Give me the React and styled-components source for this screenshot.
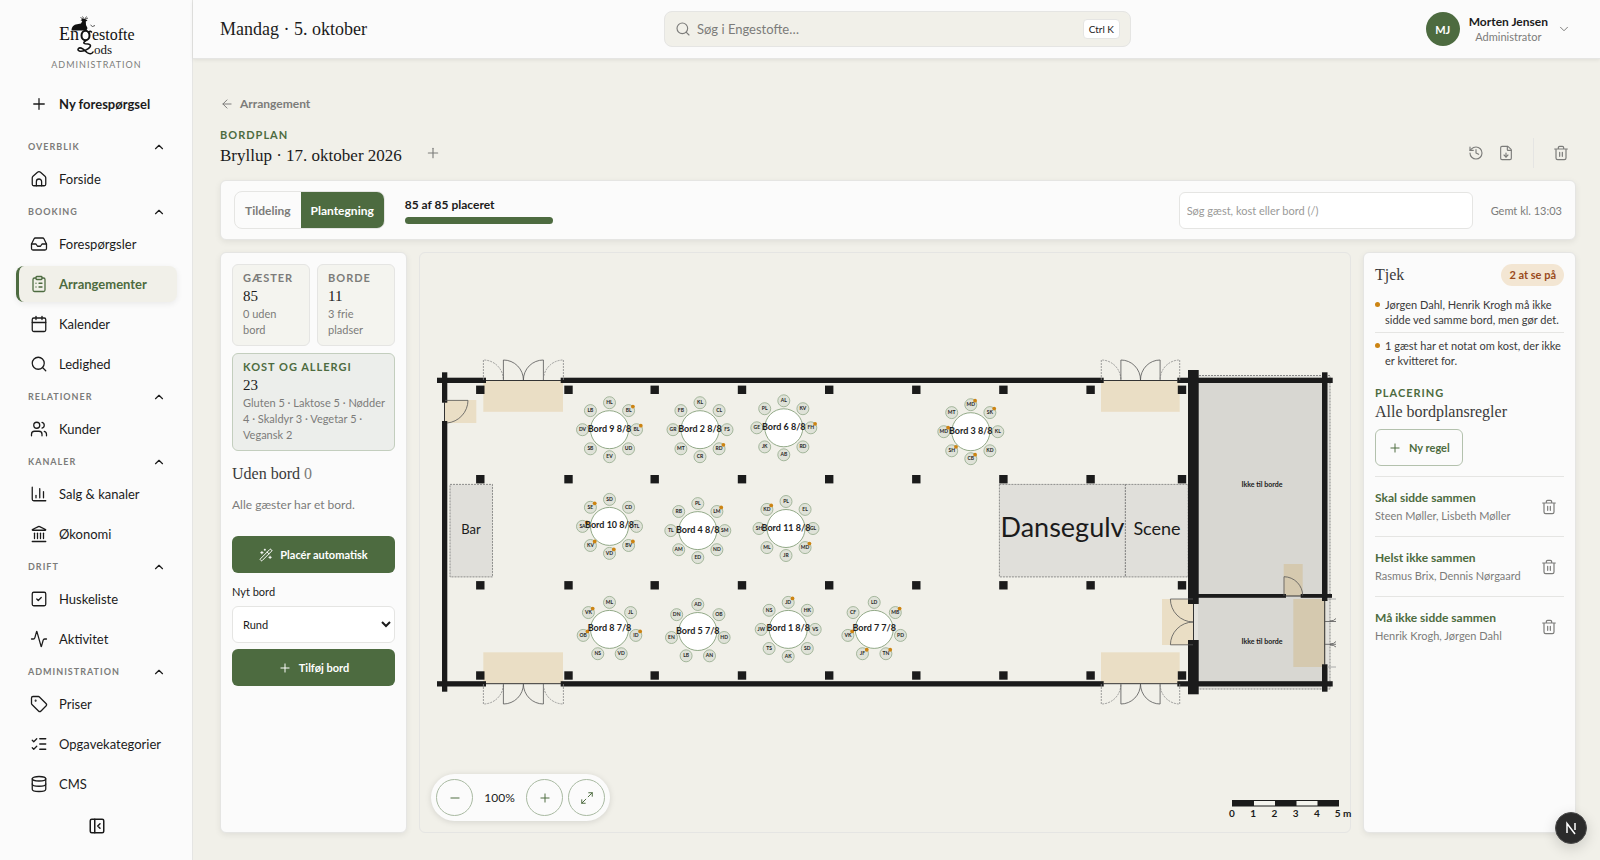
import React from "react";
import styled, { createGlobalStyle, css, ThemeProvider } from "styled-components";
import {
  Activity, ArrowLeft, Calendar, ChartColumn, ChevronDown, ChevronUp, ClipboardList, Database,
  FileDown, History, Inbox, Landmark, ListChecks, Maximize2, Minus, PanelLeftClose, Plus,
  Search, SquareCheck, Tag, Users, WandSparkles,
} from "lucide-react";

const theme = {
  sans: '"Lato", "Liberation Sans", sans-serif',
  serif: '"Liberation Serif", "DejaVu Serif", serif',
  page: "#f1f0e9",
  card: "#fbfbfb",
  ink: "#1b1b1b",
  soft: "#3a3a3a",
  muted: "#7c7c7a",
  line: "#e5e5e3",
  green: "#4d6b40",
  amber: "#cc8413",
};

const GlobalStyle = createGlobalStyle`
  *, *::before, *::after { box-sizing: border-box; }
  body { margin: 0; font-family: ${theme.sans}; color: ${theme.ink}; background: ${theme.page}; }
  button, input, select { font: inherit; color: inherit; }
  button { cursor: pointer; padding: 0; border: 0; background: none; }
  h1, h2, p, ul { margin: 0; padding: 0; }
  ul { list-style: none; }
  a { color: inherit; text-decoration: none; }
`;

/* Icons the package does not have in this shape */

const HouseIcon = ({ size = 18, strokeWidth = 1.7 }) => (
  <svg width={size} height={size} viewBox="0 0 24 24" fill="none" stroke="currentColor" strokeWidth={strokeWidth} strokeLinecap="round" strokeLinejoin="round" aria-hidden="true">
    <path d="M3 10.5a3 3 0 0 1 1-2.2l6-5.2a3 3 0 0 1 4 0l6 5.2a3 3 0 0 1 1 2.2V19a2 2 0 0 1-2 2H5a2 2 0 0 1-2-2z" />
    <path d="M8.5 21v-5.500a3.500 3.500 0 0 1 7 0V21" />
  </svg>
);

const TrashIcon = ({ size = 16 }) => (
  <svg width={size} height={size} viewBox="0 0 24 24" fill="none" stroke="currentColor" strokeWidth="1.8" strokeLinecap="round" strokeLinejoin="round" aria-hidden="true">
    <path d="M2.500 6h19M8 6V4a2 2 0 0 1 2-2h4a2 2 0 0 1 2 2v2M4.500 6v13.500a2.500 2.500 0 0 0 2.500 2.500h10a2.500 2.500 0 0 0 2.500-2.500V6M10 11v6M14 11v6" />
  </svg>
);

/* Frame */

const Shell = styled.div`
  display: flex;
  min-height: 100vh;
`;

const Sidebar = styled.aside`
  flex: 0 0 193px;
  display: flex;
  flex-direction: column;
  align-items: stretch;
  padding: 14px 15px 22px 16px;
  background: ${(p) => p.theme.card};
  border-right: 1px solid ${(p) => p.theme.line};
`;

const Brand = styled.a`
  display: flex;
  flex-direction: column;
  align-items: center;
  height: 72px;
`;

const BrandCaption = styled.span`
  font-size: 9px;
  line-height: 16px;
  letter-spacing: 1px;
  color: ${(p) => p.theme.muted};
`;

const NavGroup = styled.section`
  display: flex;
  flex-direction: column;
  gap: 4px;
`;

const NavHeading = styled.button`
  display: flex;
  align-items: center;
  justify-content: space-between;
  height: 29px;
  margin-bottom: -4px;
  padding: 0 11px 0 12px;
  font-size: 9px;
  font-weight: 700;
  letter-spacing: 1px;
  color: ${(p) => p.theme.muted};
  svg { color: ${(p) => p.theme.ink}; }
`;

const NavLink = styled.a`
  display: flex;
  align-items: center;
  gap: 11px;
  height: 36px;
  padding-left: 11px;
  border-left: 3px solid transparent;
  border-radius: 8px;
  font-size: 13px;
  white-space: nowrap;
  ${(p) => p.$strong && css`font-weight: 700; margin-bottom: 10px;`}
  ${(p) => p.$active && css`
    font-weight: 700;
    color: ${p.theme.green};
    background: ${p.theme.page};
    border-left-color: ${p.theme.green};
    box-shadow: 0 2px 6px rgba(0, 0, 0, 0.07);
  `}
`;

const CollapseButton = styled.button`
  display: flex;
  align-self: center;
  margin-top: auto;
  padding: 3px;
`;

const Column = styled.div`
  flex: 1;
  min-width: 0;
  display: flex;
  flex-direction: column;
`;

const TopBar = styled.header`
  display: grid;
  grid-template-columns: 1fr minmax(200px, 467px) 1fr;
  align-items: center;
  height: 59px;
  padding: 0 25px 0 27px;
  background: ${(p) => p.theme.card};
  border-bottom: 1px solid ${(p) => p.theme.line};
  box-shadow: 0 1px 4px rgba(0, 0, 0, 0.08);
`;

const Today = styled.p`
  font-family: ${(p) => p.theme.serif};
  font-size: 18px;
`;

const GlobalSearch = styled.label`
  display: flex;
  align-items: center;
  gap: 6px;
  height: 36px;
  padding: 0 10px;
  border: 1px solid ${(p) => p.theme.line};
  border-radius: 8px;
  background: ${(p) => p.theme.page};
  color: ${(p) => p.theme.muted};
  input {
    flex: 1;
    min-width: 0;
    padding: 0;
    border: 0;
    outline: 0;
    background: none;
    font-size: 13px;
  }
  input::placeholder { color: ${(p) => p.theme.muted}; opacity: 1; }
`;

const Shortcut = styled.kbd`
  padding: 0 5px;
  border: 1px solid ${(p) => p.theme.line};
  border-radius: 4px;
  background: #fff;
  font-family: inherit;
  font-size: 10px;
  line-height: 18px;
  color: ${(p) => p.theme.ink};
`;

const UserButton = styled.button`
  display: flex;
  align-items: center;
  justify-self: end;
  gap: 9px;
  padding-right: 4px;
  color: ${(p) => p.theme.muted};
`;

const Avatar = styled.span`
  display: grid;
  place-items: center;
  width: 34px;
  height: 34px;
  border-radius: 50%;
  background: ${(p) => p.theme.green};
  color: #fff;
  font-size: 11px;
  font-weight: 700;
`;

const UserText = styled.span`
  display: flex;
  flex-direction: column;
  font-size: 11px;
  line-height: 15px;
  strong { font-size: 12px; color: ${(p) => p.theme.ink}; }
`;

const Main = styled.main`
  flex: 1;
  display: flex;
  flex-direction: column;
  padding: 34px 24px 27px 27px;
`;

const BackLink = styled.a`
  display: flex;
  align-items: center;
  gap: 6px;
  font-size: 12px;
  font-weight: 700;
  line-height: 22px;
  color: ${(p) => p.theme.muted};
`;

const Heading = styled.div`
  display: flex;
  align-items: flex-end;
  margin: 12px 0 11px;
`;

const Eyebrow = styled.p`
  font-size: 11px;
  font-weight: 700;
  line-height: 16px;
  letter-spacing: 1px;
  color: ${(p) => (p.$muted ? p.theme.muted : p.theme.green)};
`;

const PlanTitle = styled.h1`
  margin-right: 16px;
  font-family: ${(p) => p.theme.serif};
  font-size: 17px;
  font-weight: 400;
  line-height: 26px;
`;

const IconButton = styled.button`
  display: grid;
  place-items: center;
  flex: 0 0 30px;
  height: 32px;
  color: ${(p) => p.theme.muted};
`;

const Actions = styled.div`
  display: flex;
  align-items: center;
  margin-left: auto;
`;

const Divider = styled.span`
  width: 1px;
  height: 30px;
  margin: 0 12px;
  background: ${(p) => p.theme.line};
`;

const Card = styled.section`
  background: ${(p) => p.theme.card};
  border: 1px solid ${(p) => p.theme.line};
  border-radius: 6px;
  box-shadow: 0 2px 6px rgba(0, 0, 0, 0.07);
`;

const Toolbar = styled(Card)`
  display: flex;
  align-items: center;
  height: 60px;
  padding: 0 13px;
  font-size: 12px;
`;

const Segments = styled.div`
  display: flex;
  height: 38px;
  border: 1px solid ${(p) => p.theme.line};
  border-radius: 8px;
  overflow: hidden;
`;

const Segment = styled.button`
  padding: 0 10px;
  font-size: 12px;
  font-weight: 700;
  color: ${(p) => (p.$on ? "#fff" : p.theme.muted)};
  background: ${(p) => (p.$on ? p.theme.green : "transparent")};
`;

const Placement = styled.div`
  width: 148px;
  margin-left: 20px;
  font-weight: 700;
  line-height: 16px;
`;

const ProgressTrack = styled.div`
  height: 7px;
  margin-top: 4px;
  border-radius: 4px;
  background: ${(p) => p.theme.line};
  overflow: hidden;
`;

const ProgressFill = styled.div`
  height: 100%;
  background: ${(p) => p.theme.green};
`;

const PlanSearch = styled.input`
  width: 294px;
  height: 37px;
  margin: 0 18px 0 auto;
  padding: 0 7px;
  border: 1px solid ${(p) => p.theme.line};
  border-radius: 6px;
  background: #fff;
  font-size: 11px;
  &::placeholder { color: #9a9a98; opacity: 1; }
`;

const Saved = styled.span`
  font-size: 11px;
  color: ${(p) => p.theme.muted};
`;

const Workspace = styled.div`
  flex: 1;
  display: grid;
  grid-template-columns: 187px minmax(0, 1fr) 213px;
  gap: 12px;
  margin-top: 12px;
`;

const SidePanel = styled(Card)`
  display: flex;
  flex-direction: column;
  padding: 11px;
`;

const StatGrid = styled.div`
  display: grid;
  grid-template-columns: 1fr 1fr;
  gap: 7px;
`;

const Stat = styled.div`
  padding: 5px 10px 7px;
  border: 1px solid ${(p) => (p.$tinted ? "#c3cebe" : p.theme.line)};
  border-radius: 6px;
  background: ${(p) => (p.$tinted ? "#eceeeb" : "#f4f4ef")};
  ${(p) => p.$tinted && css`grid-column: 1 / -1; padding-right: 4px;`}
`;

const StatValue = styled.p`
  font-family: ${(p) => p.theme.serif};
  font-size: 15px;
  line-height: 20px;
  color: ${(p) => p.theme.ink};
`;

const StatNote = styled.p`
  font-size: 11px;
  line-height: 16px;
  color: ${(p) => p.theme.muted};
`;

const PanelTitle = styled.h2`
  font-family: ${(p) => p.theme.serif};
  font-size: 16px;
  font-weight: 400;
  line-height: 22px;
  color: ${(p) => p.theme.soft};
  span { color: ${(p) => p.theme.muted}; }
`;

const Unplaced = styled.div`
  display: flex;
  flex-direction: column;
  gap: 11px;
  margin: 12px 0 22px;
  p { font-size: 12px; line-height: 18px; color: ${(p) => p.theme.muted}; }
`;

const Button = styled.button`
  display: inline-flex;
  align-items: center;
  justify-content: center;
  gap: 7px;
  height: 37px;
  padding: 0 12px;
  border-radius: 6px;
  font-size: 11px;
  font-weight: 700;
  ${(p) => p.$outline
    ? css`align-self: flex-start; margin-top: 6px; border: 1px solid #b3c1ad; color: ${p.theme.green};`
    : css`background: ${p.theme.green}; color: #fff;`}
`;

const Field = styled.label`
  display: flex;
  flex-direction: column;
  gap: 5px;
  margin: 10px 0 6px;
  font-size: 11px;
  line-height: 18px;
`;

const Select = styled.select`
  height: 37px;
  padding: 0 6px;
  border: 1px solid ${(p) => p.theme.line};
  border-radius: 6px;
  background: #fff;
  font-size: 11px;
`;

const Canvas = styled.section`
  position: relative;
  display: flex;
  min-height: 400px;
  border: 1px solid ${(p) => p.theme.line};
  border-radius: 6px;
`;

const PlanSvg = styled.svg`
  flex: 1;
  width: 100%;
  min-width: 0;
  overflow: visible;
  font-family: ${(p) => p.theme.sans};
`;

const ZoomBar = styled.div`
  position: absolute;
  left: 11px;
  bottom: 11px;
  display: flex;
  align-items: center;
  gap: 5px;
  padding: 5px;
  border-radius: 24px;
  background: ${(p) => p.theme.card};
  box-shadow: 0 1px 6px rgba(0, 0, 0, 0.12);
  output { width: 43px; text-align: center; font-size: 12px; }
`;

const RoundButton = styled.button`
  display: grid;
  place-items: center;
  width: 37px;
  height: 37px;
  border: 1px solid #a9baa2;
  border-radius: 50%;
  color: ${(p) => p.theme.green};
`;

const CheckHeader = styled.div`
  display: flex;
  align-items: center;
  justify-content: space-between;
`;

const Badge = styled.span`
  padding: 0 8px;
  border-radius: 11px;
  background: #f3e6d3;
  color: #9a4a1c;
  font-size: 11px;
  font-weight: 700;
  line-height: 22px;
`;

const Check = styled.li`
  display: flex;
  gap: 5px;
  padding: 5px 0;
  font-size: 11px;
  line-height: 15px;
  color: ${(p) => p.theme.soft};
  & + & { border-top: 1px solid ${(p) => p.theme.line}; }
  &::before {
    content: "";
    flex: 0 0 5px;
    height: 5px;
    margin-top: 5px;
    border-radius: 50%;
    background: ${(p) => p.theme.amber};
  }
`;

const Checks = styled.ul`
  margin: 6px 0 12px;
`;

const RuleList = styled.ul`
  margin-top: 10px;
`;

const Rule = styled.li`
  display: flex;
  align-items: center;
  justify-content: space-between;
  height: 60px;
  border-top: 1px solid ${(p) => p.theme.line};
`;

const RuleName = styled.p`
  font-size: 12px;
  font-weight: 700;
  line-height: 19px;
  color: ${(p) => p.theme.green};
`;

const RuleGuests = styled.p`
  font-size: 11px;
  line-height: 18px;
  color: ${(p) => p.theme.muted};
`;

const DevBadge = styled.button`
  position: fixed;
  right: 13px;
  bottom: 16px;
  display: grid;
  place-items: center;
  width: 32px;
  height: 32px;
  border: 1px solid #4b4b4b;
  border-radius: 50%;
  background: #2b2b2b;
  color: #fff;
  box-shadow: 0 4px 14px rgba(0, 0, 0, 0.16);
`;

/* Data */

const navGroups = [
  ["OVERBLIK", [["Forside", HouseIcon]]],
  ["BOOKING", [["Forespørgsler", Inbox], ["Arrangementer", ClipboardList], ["Kalender", Calendar], ["Ledighed", Search]]],
  ["RELATIONER", [["Kunder", Users]]],
  ["KANALER", [["Salg & kanaler", ChartColumn], ["Økonomi", Landmark]]],
  ["DRIFT", [["Huskeliste", SquareCheck], ["Aktivitet", Activity]]],
  ["ADMINISTRATION", [["Priser", Tag], ["Opgavekategorier", ListChecks], ["CMS", Database]]],
];

/* Seats run clockwise from the top; a star marks a guest with a diet note. */
const tables = [
  { name: "Bord 9 8/8", x: 609.5, y: 429.7, seats: "HL BL* BL* UD EV SB DV LB" },
  { name: "Bord 2 8/8", x: 700, y: 429.7, seats: "KL CL FS RD* CR MT GR FB" },
  { name: "Bord 6 8/8", x: 783.8, y: 427.8, seats: "AL KV FH* RD AB JK GE PL" },
  { name: "Bord 3 8/8", x: 970.8, y: 431.7, seats: "MD* SK* KL KD CB* SH* MD* MT" },
  { name: "Bord 10 8/8", x: 609.5, y: 526.4, seats: "SD CD TL BV* VD* KV* SA* SE*" },
  { name: "Bord 4 8/8", x: 697.8, y: 530.6, seats: "PL LM* SM ND ED AM TL RB" },
  { name: "Bord 11 8/8", x: 786, y: 528.5, seats: "PL EL GL MD* JR ML SH KD*" },
  { name: "Bord 8 7/8", x: 609.5, y: 629.4, seats: "ML JL ID* VD NS OB* VK*" },
  { name: "Bord 5 7/8", x: 697.8, y: 631.5, seats: "AD OB HD AN LB EN DN" },
  { name: "Bord 1 8/8", x: 788.2, y: 629.4, seats: "JD* HK VS SD AK TS JW NS" },
  { name: "Bord 7 7/8", x: 874.2, y: 629.4, seats: "LD MB* PD TN* JF* VK* CF" },
];

const pillarColumns = [480.3, 568.5, 654.7, 742, 829.2, 916.3, 1003.4, 1090.6, 1182];
const pillarRows = [389.8, 479.2, 585.3, 675.5];

/* x1, y1, x2, y2 */
const walls = [
  [437, 377.7, 486, 383], [560.7, 377.7, 1103.7, 383], [1177.3, 377.7, 1332.7, 383],
  [437, 681.2, 486, 686.5], [560.7, 681.2, 1103.7, 686.5], [1177.3, 681.2, 1332.7, 686.5],
  [442, 372.3, 447.3, 402.7], [442, 421, 447.3, 691.7],
  [1188, 370, 1198.7, 604], [1188, 640, 1198.7, 694.3],
  [1322, 372.3, 1327.5, 601], [1322, 664.3, 1327.5, 691.7],
  [1198, 594, 1286, 597.8], [1300.7, 594, 1332, 597.8],
];

const thresholds = [
  "M486 380.5H561", "M1103 380.500H1178", "M486 683.700H561", "M1103 683.700H1178",
  "M444.500 402V421", "M1193.500 604V640", "M1285 596H1301", "M1324.700 601V665",
];

const rules = [
  ["Skal sidde sammen", "Steen Møller, Lisbeth Møller"],
  ["Helst ikke sammen", "Rasmus Brix, Dennis Nørgaard"],
  ["Må ikke sidde sammen", "Henrik Krogh, Jørgen Dahl"],
];

/* Drawings */

const Logo = () => (
  <svg width="80" height="43" viewBox="0 0 80 43" role="img" aria-label="Engestofte Gods" fill="#111">
    <g fontFamily="Liberation Serif, serif">
      <text x="2" y="26" fontSize="18">En</text>
      <text x="35" y="26" fontSize="16">estofte</text>
      <text x="37" y="40" fontSize="13">ods</text>
    </g>
    <path d="M14.500 16.500C14.500 13 17 10.500 20 10.300L24 9.600 25.300 7 23.500 6.200 25.500 4.800 28 5 30.500 6.500 28.800 7.600 29 11 30.500 14 29.500 16.500Z" />
    <path d="M26 5L23.500 3.500M27 4.800L25.500 2.500M28 5L29.500 2.500M28.500 5.200L31 4M33.500 11L35.500 12.500 38 11.500" fill="none" stroke="#111" strokeWidth="0.700" />
    <ellipse cx="28.500" cy="21.500" rx="4" ry="4.800" fill="none" stroke="#111" strokeWidth="2" />
    <path d="M31.500 18.500Q33 16.500 34.500 18M29 26.500C25 29 27 30 31 30C35.500 30.500 33.500 34.500 28 36.500C23.500 38 19.500 37 21.500 34.500C23.500 32.500 27 35.500 30 38.500C32.500 40.500 35 40 36 38" fill="none" stroke="#111" strokeWidth="1.600" strokeLinecap="round" />
  </svg>
);

/* A pair of double doors: the outer leaves are dashed. dir is -1 upwards, 1 downwards. */
const DoubleDoors = ({ x, y, leaf, dir }) => {
  const tip = y + dir * 20;
  const leafPath = (hinge, side) =>
    `M${hinge} ${y}V${tip}A${leaf} 20 0 0 ${side * dir < 0 ? 1 : 0} ${hinge + side * leaf} ${y}`;
  return (
    <g fill="none" stroke="#555" strokeWidth="0.8">
      <path d={leafPath(x, 1)} strokeDasharray="2 1" stroke="#888" />
      <path d={leafPath(x + leaf, 1)} />
      <path d={leafPath(x + leaf * 3, -1)} />
      <path d={leafPath(x + leaf * 4, -1)} strokeDasharray="2 1" stroke="#888" />
    </g>
  );
};

const GuestTable = ({ name, x, y, seats }) => {
  const list = seats.split(" ");
  return (
    <g textAnchor="middle">
      <circle cx={x} cy={y} r="19" fill="#fff" stroke="#87a07c" strokeWidth="0.9" />
      {list.map((seat, i) => {
        const angle = (i / list.length) * Math.PI * 2;
        const sx = x + Math.sin(angle) * 27;
        const sy = y - Math.cos(angle) * 27;
        return (
          <g key={i}>
            <circle cx={sx} cy={sy} r="6" fill="#dfe2d8" stroke="#93a98a" strokeWidth="0.8" />
            <text x={sx} y={sy + 1.5} fontSize="5" fontWeight="700" fill="#222">{seat.slice(0, 2)}</text>
            {seat.endsWith("*") && <circle cx={sx + 4.3} cy={sy - 4} r="1.900" fill={theme.amber} />}
          </g>
        );
      })}
      <text x={x} y={y + 2} fontSize="9" fontWeight="700" fill="#222">{name}</text>
    </g>
  );
};

const zone = { fill: "#e0dfda", stroke: "#777", strokeWidth: 0.8, strokeDasharray: "2 1" };

const FloorPlan = () => (
  <PlanSvg viewBox="420 253 930 579" role="img" aria-label="Plantegning">
    <rect x="1193" y="375.500" width="137" height="313.500" fill="#e3e2dd" stroke="#888" strokeWidth="1" strokeDasharray="2 1" />
    <rect x="1198" y="382" width="125" height="300" fill="#d8d7d2" />
    {[483.3, 1101].map((x) => (
      <g key={x} fill="#eadec5">
        <rect x={x} y="380.500" width={x < 500 ? 79.7 : 78.7} height="31.300" />
        <rect x={x} y="652.300" width={x < 500 ? 79.7 : 78.7} height="31.300" />
      </g>
    ))}
    <rect x="444.700" y="400" width="31.600" height="23" fill="#eadec5" />
    <rect x="1162" y="599" width="31" height="46" fill="#eadec5" />
    <rect x="1283.700" y="564" width="19" height="32" fill="#d5c9af" />
    <rect x="1293.300" y="599" width="32" height="68" fill="#d5c9af" />

    <rect x="450" y="484.400" width="42.500" height="92.500" {...zone} />
    <rect x="999.400" y="484.400" width="126" height="92.500" {...zone} />
    <rect x="1125.400" y="484.400" width="62.800" height="92.500" {...zone} />

    <g fill="#1b1b1b">
      {walls.map(([x1, y1, x2, y2]) => (
        <rect key={`${x1}-${y1}`} x={x1} y={y1} width={x2 - x1} height={y2 - y1} />
      ))}
      {pillarRows.flatMap((y) =>
        pillarColumns.map((x) => <rect key={`${x}-${y}`} x={x - 4.2} y={y - 4.2} width="8.400" height="8.400" />)
      )}
    </g>
    <path d={thresholds.join("")} stroke="#333" strokeWidth="1" />

    <DoubleDoors x={483.4} y={380} leaf={20} dir={-1} />
    <DoubleDoors x={483.4} y={684} leaf={20} dir={1} />
    <DoubleDoors x={1101.3} y={380} leaf={19.6} dir={-1} />
    <DoubleDoors x={1101.3} y={684} leaf={19.6} dir={1} />
    <g fill="none" stroke="#555" strokeWidth="0.8">
      <path d="M445 400.400H468A23 23 0 0 1 447 423" />
      <path d="M1193 599H1170.400A23 23 0 0 0 1193 622A23 23 0 0 0 1170.400 644.800H1193" />
      <path d="M1284 596V576.700A19 19 0 0 1 1302.700 595.700" />
      <path d="M1325 621.500H1336M1325 644.300H1336M1330 621Q1334 621 1336 618.500M1330 644Q1334 644 1336 641.500M1330 645Q1334 645 1336 647" />
      <path d="M1327 599H1336M1327 667H1336" stroke="#999" />
    </g>

    {tables.map((t) => <GuestTable key={t.name} {...t} />)}

    <g textAnchor="middle" fill="#1b1b1b">
      <text x="471" y="534" fontSize="13">Bar</text>
      <text x="1062.500" y="537" fontSize="27">Dansegulv</text>
      <text x="1157" y="535" fontSize="18">Scene</text>
      <text x="1262" y="487" fontSize="7" fontWeight="700">Ikke til borde</text>
      <text x="1262" y="644" fontSize="7" fontWeight="700">Ikke til borde</text>
    </g>

    <rect x="1232" y="800" width="107" height="6.500" fill="#1b1b1b" />
    <rect x="1254" y="801" width="21" height="4.500" fill="#f4f4ee" />
    <rect x="1296.500" y="801" width="21" height="4.500" fill="#f4f4ee" />
    <g textAnchor="middle" fontSize="10" fontWeight="700" fill="#1b1b1b">
      {["0", "1", "2", "3", "4"].map((n, i) => <text key={n} x={1232 + i * 21.2} y="817">{n}</text>)}
      <text x="1343" y="817">5 m</text>
    </g>
  </PlanSvg>
);

/* Page */

export default function App() {
  return (
    <ThemeProvider theme={theme}>
      <GlobalStyle />
      <Shell>
        <Sidebar>
          <Brand href="#forside">
            <Logo />
            <BrandCaption>ADMINISTRATION</BrandCaption>
          </Brand>
          <nav>
            <NavLink href="#ny" $strong><Plus size={18} strokeWidth={1.7} />Ny forespørgsel</NavLink>
            {navGroups.map(([title, items]) => (
              <NavGroup key={title}>
                <NavHeading type="button" aria-expanded="true">
                  {title}
                  <ChevronUp size={14} strokeWidth={2} />
                </NavHeading>
                {items.map(([label, Icon]) => (
                  <NavLink key={label} href={`#${label}`} $active={label === "Arrangementer"}>
                    <Icon size={18} strokeWidth={1.7} />
                    {label}
                  </NavLink>
                ))}
              </NavGroup>
            ))}
          </nav>
          <CollapseButton type="button" aria-label="Skjul menu"><PanelLeftClose size={18} /></CollapseButton>
        </Sidebar>

        <Column>
          <TopBar>
            <Today>Mandag · 5. oktober</Today>
            <GlobalSearch>
              <Search size={16} strokeWidth={1.7} />
              <input type="search" placeholder="Søg i Engestofte…" aria-label="Søg i Engestofte" />
              <Shortcut>Ctrl K</Shortcut>
            </GlobalSearch>
            <UserButton type="button">
              <Avatar>MJ</Avatar>
              <UserText><strong>Morten Jensen</strong>Administrator</UserText>
              <ChevronDown size={14} strokeWidth={1.7} />
            </UserButton>
          </TopBar>

          <Main>
            <BackLink href="#arrangement"><ArrowLeft size={14} strokeWidth={1.7} />Arrangement</BackLink>
            <Heading>
              <div>
                <Eyebrow>BORDPLAN</Eyebrow>
                <PlanTitle>Bryllup · 17. oktober 2026</PlanTitle>
              </div>
              <IconButton type="button" aria-label="Ny bordplan"><Plus size={16} strokeWidth={1.7} /></IconButton>
              <Actions>
                <IconButton type="button" aria-label="Historik"><History size={16} strokeWidth={1.7} /></IconButton>
                <IconButton type="button" aria-label="Hent fil"><FileDown size={16} strokeWidth={1.7} /></IconButton>
                <Divider />
                <IconButton type="button" aria-label="Slet bordplan"><TrashIcon /></IconButton>
              </Actions>
            </Heading>

            <Toolbar>
              <Segments>
                <Segment type="button">Tildeling</Segment>
                <Segment type="button" $on aria-pressed="true">Plantegning</Segment>
              </Segments>
              <Placement>
                85 af 85 placeret
                <ProgressTrack role="progressbar" aria-label="Placerede gæster" aria-valuenow={85} aria-valuemax={85}>
                  <ProgressFill />
                </ProgressTrack>
              </Placement>
              <PlanSearch type="search" placeholder="Søg gæst, kost eller bord (/)" aria-label="Søg gæst, kost eller bord" />
              <Saved>Gemt kl. 13:03</Saved>
            </Toolbar>

            <Workspace>
              <SidePanel>
                <StatGrid>
                  <Stat>
                    <Eyebrow $muted>GÆSTER</Eyebrow>
                    <StatValue>85</StatValue>
                    <StatNote>0 uden bord</StatNote>
                  </Stat>
                  <Stat>
                    <Eyebrow $muted>BORDE</Eyebrow>
                    <StatValue>11</StatValue>
                    <StatNote>3 frie pladser</StatNote>
                  </Stat>
                  <Stat $tinted>
                    <Eyebrow>KOST OG ALLERGI</Eyebrow>
                    <StatValue>23</StatValue>
                    <StatNote>Gluten 5 · Laktose 5 · Nødder 4 · Skaldyr 3 · Vegetar 5 · Vegansk 2</StatNote>
                  </Stat>
                </StatGrid>
                <Unplaced>
                  <PanelTitle>Uden bord <span>0</span></PanelTitle>
                  <p>Alle gæster har et bord.</p>
                </Unplaced>
                <Button type="button"><WandSparkles size={14} strokeWidth={1.7} />Placér automatisk</Button>
                <Field>
                  Nyt bord
                  <Select defaultValue="Rund"><option>Rund</option></Select>
                </Field>
                <Button type="button"><Plus size={14} strokeWidth={1.7} />Tilføj bord</Button>
              </SidePanel>

              <Canvas>
                <FloorPlan />
                <ZoomBar>
                  <RoundButton type="button" aria-label="Zoom ud"><Minus size={14} strokeWidth={1.7} /></RoundButton>
                  <output>100%</output>
                  <RoundButton type="button" aria-label="Zoom ind"><Plus size={14} strokeWidth={1.7} /></RoundButton>
                  <RoundButton type="button" aria-label="Tilpas"><Maximize2 size={14} strokeWidth={1.7} /></RoundButton>
                </ZoomBar>
              </Canvas>

              <SidePanel>
                <CheckHeader>
                  <PanelTitle>Tjek</PanelTitle>
                  <Badge>2 at se på</Badge>
                </CheckHeader>
                <Checks>
                  <Check>Jørgen Dahl, Henrik Krogh må ikke sidde ved samme bord, men gør det.</Check>
                  <Check>1 gæst har et notat om kost, der ikke er kvitteret for.</Check>
                </Checks>
                <Eyebrow>PLACERING</Eyebrow>
                <PanelTitle>Alle bordplansregler</PanelTitle>
                <Button type="button" $outline><Plus size={14} strokeWidth={1.7} />Ny regel</Button>
                <RuleList>
                  {rules.map(([name, guests]) => (
                    <Rule key={name}>
                      <div>
                        <RuleName>{name}</RuleName>
                        <RuleGuests>{guests}</RuleGuests>
                      </div>
                      <IconButton type="button" aria-label={`Slet ${name}`}><TrashIcon /></IconButton>
                    </Rule>
                  ))}
                </RuleList>
              </SidePanel>
            </Workspace>
          </Main>
        </Column>
      </Shell>
      <DevBadge type="button" aria-label="Udviklerværktøjer">
        <svg width="14" height="14" viewBox="0 0 14 14" fill="none" stroke="currentColor" strokeWidth="1.500" aria-hidden="true">
          <path d="M3 12V2.500L11 13" />
          <path d="M11 2V9" />
        </svg>
      </DevBadge>
    </ThemeProvider>
  );
}
